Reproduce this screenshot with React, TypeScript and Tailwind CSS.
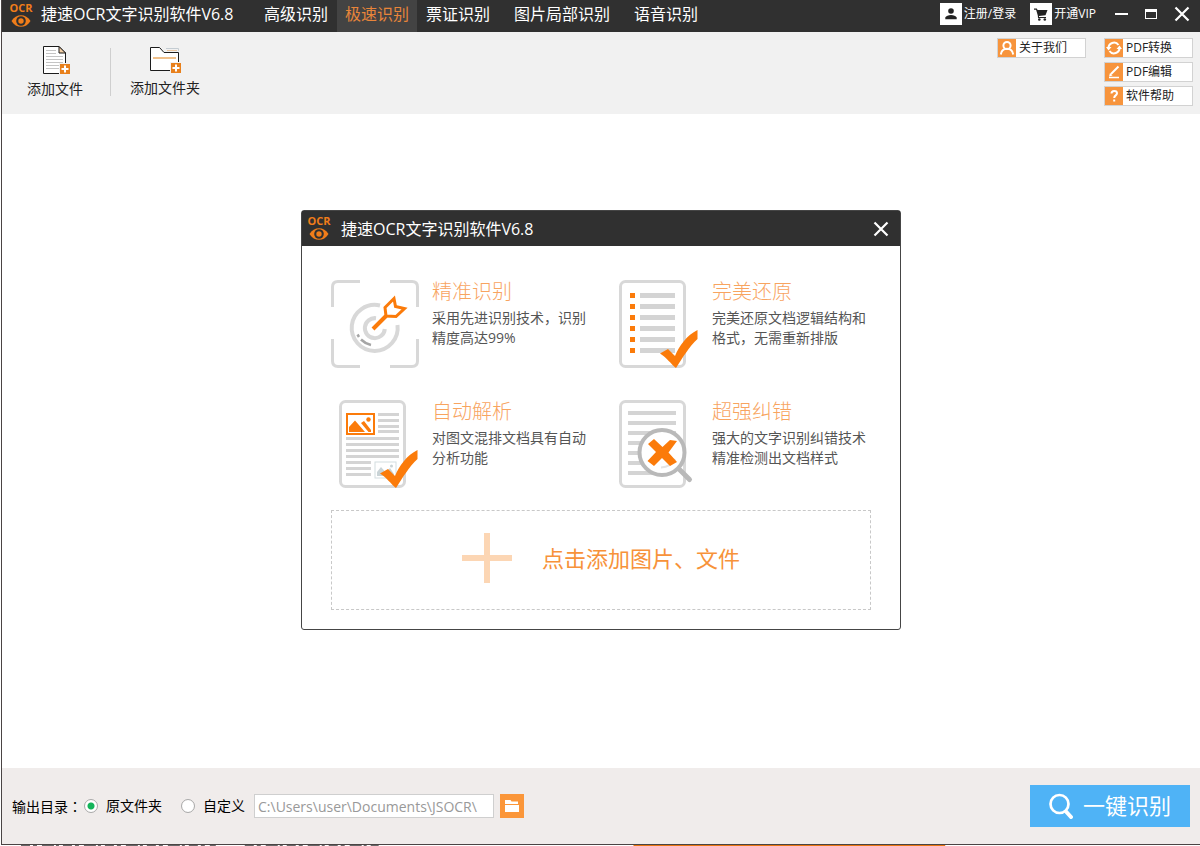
import React, { useState } from "react";

const ORANGE = "#fb7b0a";
const GREY = "#d8d8d8";

function Logo() {
  return (
    <div className="flex w-6 shrink-0 flex-col items-center text-[#f07d1a]">
      <span className="text-[11px] leading-3 font-bold">OCR</span>
      <svg viewBox="0 0 20 14" className="h-3.5 w-5" aria-hidden="true">
        <path d="M.5 7C5-.8 15-.8 19.500 7 15 14.800 5 14.800 .5 7Z" fill="currentColor" />
        <circle cx="10" cy="7" r="4.800" fill="#303030" />
        <circle cx="10" cy="7" r="2.700" fill="currentColor" />
      </svg>
    </div>
  );
}

function CloseIcon() {
  return (
    <svg viewBox="0 0 16 16" className="h-4 w-4" aria-hidden="true">
      <path d="M1.500 1.500 14.500 14.500M14.500 1.500 1.500 14.500" stroke="currentColor" strokeWidth="2.200" />
    </svg>
  );
}

function Tab({ label, active, onClick }: { label: string; active: boolean; onClick: () => void }) {
  return (
    <button
      type="button"
      onClick={onClick}
      className={
        active
          ? "bg-[#434343] px-2 pb-1 text-base text-[#e8853a]"
          : "px-2 pb-1 text-base text-white"
      }
    >
      {label}
    </button>
  );
}

function TitleBar() {
  const [tab, setTab] = useState("极速识别");
  const render = (label: string) => (
    <Tab key={label} label={label} active={tab === label} onClick={() => setTab(label)} />
  );
  return (
    <header className="flex h-8 items-stretch bg-[#303030] pr-2.5 pl-[7px] whitespace-nowrap text-white">
      <div className="flex items-start gap-2">
        <div className="pt-0.5">
          <Logo />
        </div>
        <h1 className="w-[215px] text-base leading-7">捷速OCR文字识别软件V6.8</h1>
      </div>
      <nav className="flex gap-px">
        {["高级识别", "极速识别"].map(render)}
        <div className="flex gap-2">{["票证识别", "图片局部识别", "语音识别"].map(render)}</div>
      </nav>
      <div className="ml-auto flex items-center gap-3.5 pb-1 text-xs">
        <button type="button" className="flex items-center gap-0.5">
          <span className="flex h-[22px] w-[22px] items-center justify-center bg-white">
            <svg viewBox="0 0 12 12" className="h-3 w-3" fill="#222" aria-hidden="true">
              <circle cx="6" cy="3" r="2.800" />
              <path d="M.3 11.200V9.600C1 7.900 3.500 6.900 6 6.900s5 1 5.700 2.700v1.600Z" />
            </svg>
          </span>
          注册/登录
        </button>
        <button type="button" className="flex items-center gap-0.5">
          <span className="flex h-[22px] w-[22px] items-center justify-center bg-white">
            <svg viewBox="0 0 14 13" className="h-[13px] w-3.5" fill="#222" aria-hidden="true">
              <path d="M0 .5h2.800l.8 1.500H13.500L11.500 7.200 5 8v1h7v1H4L3.800 7.500 2.100 1.700H0Z" />
              <circle cx="5.300" cy="11.500" r="1.300" />
              <circle cx="10.800" cy="11.500" r="1.300" />
            </svg>
          </span>
          开通VIP
        </button>
        <div className="flex items-center gap-4 pl-1">
          <button type="button" aria-label="最小化">
            <svg viewBox="0 0 14 14" className="h-3.5 w-3.5" aria-hidden="true">
              <path d="M1 7H14" stroke="white" strokeWidth="2" />
            </svg>
          </button>
          <button type="button" aria-label="最大化">
            <svg viewBox="0 0 14 14" className="h-3.5 w-3.5" aria-hidden="true">
              <path d="M1 2h12v10H1ZM2 5v6h10V5Z" fill="white" fillRule="evenodd" />
            </svg>
          </button>
          <button type="button" aria-label="关闭">
            <CloseIcon />
          </button>
        </div>
      </div>
    </header>
  );
}

function PlusBadge({ x, y }: { x: number; y: number }) {
  return (
    <g>
      <rect x={x - 1} y={y - 1} width="12" height="12" fill="#f1f1f1" />
      <rect x={x} y={y} width="10" height="10" fill="#e8801c" />
      <path d={`M${x + 5} ${y + 1.5}v7M${x + 1.5} ${y + 5}h7`} stroke="white" strokeWidth="2" />
    </g>
  );
}

function FileIcon() {
  return (
    <svg viewBox="0 0 28 30" className="h-[30px] w-7" aria-hidden="true">
      <path d="M.5 1.500H16L22.500 8V28.500H.5Z" fill="white" stroke="#1c1c1c" />
      <path d="M16 1.500V8H22.500Z" fill="#f2cfa6" stroke="#1c1c1c" />
      <path
        d="M3 5.500H13M3 8.500H13M3 11.500H20M3 14.500H20M3 17.500H20M3 20.500H16M3 23.500H16"
        stroke="#c4c4c4"
      />
      <PlusBadge x={17} y={19} />
    </svg>
  );
}

function FolderIcon() {
  return (
    <svg viewBox="0 0 33 28" className="h-7 w-[33px]" aria-hidden="true">
      <path d="M17 2.500H29.500V5" fill="none" stroke="#c4ccd2" />
      <path d="M1.500 1.500H10.500L15 6.500H29.500V24.500H1.500Z" fill="white" stroke="#1c1c1c" />
      <path d="M18 4.500H28" stroke="#e9c49d" />
      <path d="M4 12H27" stroke="#f0c08a" strokeWidth="2" />
      <PlusBadge x={22} y={17} />
    </svg>
  );
}

function SideButton({ label, children }: { label: string; children: React.ReactNode }) {
  return (
    <button
      type="button"
      className="flex h-5 w-[89px] items-center gap-[3px] border border-[#d2d2d2] bg-white text-xs text-[#222]"
    >
      <span className="flex h-[18px] w-[18px] shrink-0 items-center justify-center bg-[#f7943c]">
        <svg
          viewBox="0 0 18 18"
          className="h-[18px] w-[18px]"
          fill="none"
          stroke="white"
          strokeWidth="2"
          aria-hidden="true"
        >
          {children}
        </svg>
      </span>
      {label}
    </button>
  );
}

function Toolbar() {
  return (
    <div className="flex h-[82px] items-start bg-[#f1f1f1] pr-[7px] pl-[25px] text-sm text-[#222]">
      <button type="button" className="flex flex-col items-center gap-1 pt-[13px]">
        <span className="pl-[3px]">
          <FileIcon />
        </span>
        添加文件
      </button>
      <div className="mt-4 mr-[19px] ml-[27px] h-12 w-px bg-[#cfcfcf]" />
      <button type="button" className="flex flex-col items-center gap-1 pt-3.5">
        <FolderIcon />
        添加文件夹
      </button>
      <div className="ml-auto flex items-start gap-[18px] pt-1.5">
        <SideButton label="关于我们">
          <circle cx="9" cy="6.500" r="3.600" />
          <path d="M2.800 15.500C3.300 11.800 5.500 9.800 9 9.800s5.700 2 6.200 5.700" />
        </SideButton>
        <div className="flex flex-col gap-1">
          <SideButton label="PDF转换">
            <path d="M3.500 9.500A5.500 5.500 0 0 1 13.500 6M14.500 8.500A5.500 5.500 0 0 1 4.500 12" />
            <path d="M1 8h5.500L3.500 11.500ZM17 10h-5.500L14.500 6.500Z" fill="white" stroke="none" />
          </SideButton>
          <SideButton label="PDF编辑">
            <path d="M6 11 13.500 3.500" />
            <path d="M4 13.500 5 10 7.500 12.500Z" fill="white" stroke="none" />
            <path d="M4 14.500H14" strokeWidth="1.500" />
          </SideButton>
          <SideButton label="软件帮助">
            <path d="M6.500 6.500C6.500 3 12 3.200 12 6.300 12 8.500 9.200 8.300 9.200 11M9.200 12.500v2" />
          </SideButton>
        </div>
      </div>
    </div>
  );
}

function Art({ children }: { children: React.ReactNode }) {
  return (
    <svg viewBox="0 0 88 88" className="h-[88px] w-[88px] shrink-0" aria-hidden="true">
      {children}
    </svg>
  );
}

function Sheet() {
  return <rect x="9.500" y="1.500" width="64" height="85" rx="5" fill="white" stroke={GREY} strokeWidth="3" />;
}

function Check() {
  return (
    <path
      d="M49 73.500 57 69 64 76C68 66 76 55 86.500 50V59C78 67 72 77 65 88 60 84 56 78 49 73.500Z"
      fill={ORANGE}
    />
  );
}

function TargetArt() {
  return (
    <Art>
      <g fill="none" stroke={GREY} strokeWidth="3">
        <path d="M29 1.500H7Q1.500 1.500 1.500 7V27M59 1.500H81Q86.500 1.500 86.500 7V27M1.500 59V81Q1.500 86.500 7 86.500H29M59 86.500H81Q86.500 86.500 86.500 81V59" />
        <path d="M49 25.500A23 23 0 1 0 66.500 45" strokeWidth="4" />
        <path d="M45 38.200A10 10 0 1 0 53.800 49" strokeWidth="4" />
      </g>
      <path d="M26.500 54.500l1.500 2.500M30 59.500Q34 63.500 40 65" fill="none" stroke="#a5a5a5" strokeWidth="2.500" />
      <path d="M42 49 55 36" stroke={ORANGE} strokeWidth="4" />
      <path
        d="M54 27.500 63 18.500 64.500 26.500 73.500 28.500 65 36.500 55 36Z"
        fill="white"
        stroke={ORANGE}
        strokeWidth="3"
      />
    </Art>
  );
}

function ListArt() {
  return (
    <Art>
      <Sheet />
      {[13, 24, 35, 46, 57, 68].map((y) => (
        <g key={y}>
          <rect x="19" y={y} width="5" height="5" fill={ORANGE} />
          <rect x="29" y={y} width="35" height="5" fill="#d4d4d4" />
        </g>
      ))}
      <Check />
    </Art>
  );
}

function PictureArt() {
  return (
    <Art>
      <Sheet />
      <path
        d="M47 14.500H68M47 20.500H68M47 26.500H68M47 31.500H68M15 38.500H68M15 44.500H68M15 50.500H68M15 56.500H68M15 62.500H40M15 68.500H40M15 74.500H40"
        stroke="#d4d4d4"
        strokeWidth="3"
      />
      <rect x="16" y="14" width="27" height="20" fill="white" stroke={ORANGE} strokeWidth="2" />
      <path d="M18 32V27L24 20.500 34 32ZM30 23 33 21 40 30V32H37.500Z" fill={ORANGE} />
      <circle cx="37.500" cy="19.500" r="2.200" fill={ORANGE} />
      <rect x="44" y="62" width="21" height="16" fill="white" stroke="#d4dde0" />
      <path d="M46 76V72L50 67 58 76ZM56 71 59 68 63 74V76H60Z" fill="#c9d3d6" />
      <circle cx="60.500" cy="66" r="1.500" fill="#c9d3d6" />
      <Check />
    </Art>
  );
}

function MagnifierArt() {
  return (
    <Art>
      <Sheet />
      <path
        d="M17 13H65M17 23H65M17 33H65M17 43H65M17 53H65M17 63H65M17 73H50"
        stroke="#d4d4d4"
        strokeWidth="4"
      />
      <path d="M68 69 78.500 79.500" stroke="#b9b9b9" strokeWidth="5" strokeLinecap="round" />
      <circle cx="51" cy="52.500" r="22.500" fill="white" stroke="#b9b9b9" strokeWidth="4" />
      <path d="M50 67.500Q60 67 64 59" fill="none" stroke="#e4e4e4" strokeWidth="2" />
      <path
        d="M37 44 43 39 51.500 47 59 40 66 41 57.500 52.500 66 62 59 66 51 58 43 66 36.500 61 45 52Z"
        fill={ORANGE}
      />
    </Art>
  );
}

function Feature({ art, title, lines }: { art: React.ReactNode; title: string; lines: string[] }) {
  return (
    <li className="flex gap-[13px] whitespace-nowrap">
      {art}
      <div>
        <h3 className="text-xl leading-6 font-light text-[#f8a45f]">{title}</h3>
        <p className="pt-1 text-sm leading-5 text-[#555]">
          {lines.map((line) => (
            <span key={line} className="block">
              {line}
            </span>
          ))}
        </p>
      </div>
    </li>
  );
}

function WelcomeDialog() {
  return (
    <section
      aria-label="捷速OCR文字识别软件V6.8"
      className="w-full max-w-[600px] rounded-[3px] border border-[#454545] bg-white"
    >
      <div className="flex h-[35px] items-center bg-[#303030] pr-[11px] pl-[5px] text-white">
        <div className="pb-0.5">
          <Logo />
        </div>
        <h2 className="pl-2.5 text-base">捷速OCR文字识别软件V6.8</h2>
        <button type="button" aria-label="关闭" className="ml-auto">
          <CloseIcon />
        </button>
      </div>
      <div className="px-[29px] pt-[34px] pb-[19px]">
        <ul className="grid grid-cols-2 gap-x-5 gap-y-8">
          <Feature art={<TargetArt />} title="精准识别" lines={["采用先进识别技术，识别", "精度高达99%"]} />
          <Feature art={<ListArt />} title="完美还原" lines={["完美还原文档逻辑结构和", "格式，无需重新排版"]} />
          <Feature art={<PictureArt />} title="自动解析" lines={["对图文混排文档具有自动", "分析功能"]} />
          <Feature art={<MagnifierArt />} title="超强纠错" lines={["强大的文字识别纠错技术", "精准检测出文档样式"]} />
        </ul>
        <button
          type="button"
          className="mt-[22px] flex h-[100px] w-full items-center justify-center gap-[30px] border border-dashed border-[#c8c8c8] pb-1 text-[22px] text-[#f7923a]"
        >
          <svg viewBox="0 0 50 50" className="h-[50px] w-[50px]" aria-hidden="true">
            <path d="M25 0V50M0 25H50" stroke="#fcd6b4" strokeWidth="6" />
          </svg>
          点击添加图片、文件
        </button>
      </div>
    </section>
  );
}

const radioClass =
  "h-3.5 w-3.5 appearance-none rounded-full border border-[#aaa] bg-white bg-clip-padding checked:bg-[radial-gradient(circle,#14b45a_3px,white_4px)]";

function OutputBar() {
  const [target, setTarget] = useState("source");
  return (
    <footer className="flex h-[76px] items-center bg-[#f0eceb] pr-2.5 pl-2.5 text-sm whitespace-nowrap text-black">
      <span className="w-[72px]">
        输出目录<span className="font-['Noto_Sans_CJK_TC',sans-serif]">：</span>
      </span>
      <label className="flex items-center gap-2">
        <input
          type="radio"
          name="target"
          className={radioClass}
          checked={target === "source"}
          onChange={() => setTarget("source")}
        />
        原文件夹
      </label>
      <label className="ml-[19px] flex items-center gap-2">
        <input
          type="radio"
          name="target"
          className={radioClass}
          checked={target === "custom"}
          onChange={() => setTarget("custom")}
        />
        自定义
      </label>
      <input
        type="text"
        aria-label="输出路径"
        defaultValue={"C:\\Users\\user\\Documents\\JSOCR\\"}
        className="ml-[9px] h-6 w-60 border border-[#cfcfcf] bg-white px-[3px] text-sm text-[#999]"
      />
      <button
        type="button"
        aria-label="浏览文件夹"
        className="ml-1.5 flex h-6 w-6 items-center justify-center bg-[#fb9639]"
      >
        <svg viewBox="0 0 16 14" className="h-3.5 w-4" fill="white" aria-hidden="true">
          <path d="M1 1H6.500L7.500 2.500H14V5H1ZM1 6H15V13H1Z" />
        </svg>
      </button>
      <button
        type="button"
        className="ml-auto flex h-[42px] w-40 items-center justify-center gap-2.5 bg-[#4fb3f6] text-[22px] text-white"
      >
        <svg viewBox="0 0 24 26" className="h-[26px] w-6" fill="none" stroke="white" aria-hidden="true">
          <circle cx="10.500" cy="11" r="9" strokeWidth="2.700" />
          <path d="M17 18.500 22 24" strokeWidth="4" strokeLinecap="round" />
        </svg>
        一键识别
      </button>
    </footer>
  );
}

function BackdropEdge() {
  return (
    <svg viewBox="0 0 1200 1" preserveAspectRatio="none" className="block h-px w-full" aria-hidden="true">
      <path
        d="M20 .5H215M244 .5H378"
        stroke="#666"
        strokeDasharray="9 3 4 5 12 2 3 4"
      />
      <rect x="633" y="0" width="312" height="1" fill="#e87510" />
    </svg>
  );
}

export default function App() {
  return (
    <div className="flex min-h-screen flex-col bg-white pl-px font-['Open_Sans','Noto_Sans_CJK_SC',sans-serif]">
      <div className="flex grow flex-col border-b border-l border-[#4a4444]">
        <TitleBar />
        <Toolbar />
        <main className="flex grow items-start justify-center pt-24">
          <WelcomeDialog />
        </main>
        <OutputBar />
      </div>
      <BackdropEdge />
    </div>
  );
}
